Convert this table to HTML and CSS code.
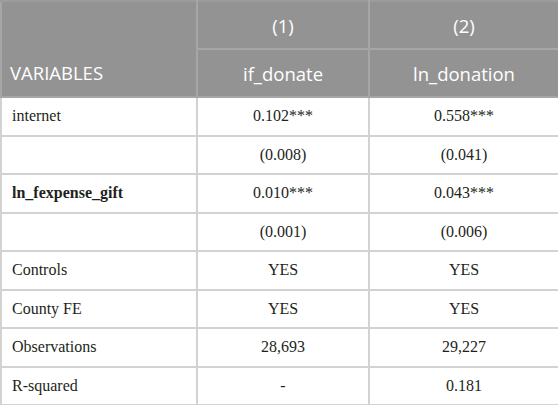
FILE: index.html
```html
<!DOCTYPE html>
<html>
<head>
<meta charset="utf-8">
<link rel="stylesheet" href="styles.css">
</head>
<body>
<table class="reg">
  <colgroup>
    <col class="c1">
    <col class="c2">
    <col class="c3">
  </colgroup>
  <thead>
    <tr class="hrow">
      <th class="var" rowspan="2">VARIABLES</th>
      <th>(1)</th>
      <th>(2)</th>
    </tr>
    <tr class="hrow">
      <th>if_donate</th>
      <th>ln_donation</th>
    </tr>
  </thead>
  <tbody>
    <tr><td class="lab">internet</td><td>0.102***</td><td>0.558***</td></tr>
    <tr><td class="lab"></td><td>(0.008)</td><td>(0.041)</td></tr>
    <tr><td class="lab bold">ln_fexpense_gift</td><td>0.010***</td><td>0.043***</td></tr>
    <tr><td class="lab"></td><td>(0.001)</td><td>(0.006)</td></tr>
    <tr><td class="lab">Controls</td><td>YES</td><td>YES</td></tr>
    <tr><td class="lab">County FE</td><td>YES</td><td>YES</td></tr>
    <tr><td class="lab">Observations</td><td>28,693</td><td>29,227</td></tr>
    <tr><td class="lab">R-squared</td><td>-</td><td>0.181</td></tr>
  </tbody>
</table>
</body>
</html>
```
FILE: styles.css
```css
html, body {
  margin: 0;
  padding: 0;
  background: #ffffff;
}
.reg {
  width: 558px;
  border-collapse: collapse;
  table-layout: fixed;
  font-family: "Liberation Serif", "Times New Roman", serif;
  font-size: 16px;
  color: #231f20;
}
.c1 { width: 196px; }
.c2 { width: 172px; }
.c3 { width: 190px; }
.reg th {
  background: #939393;
  color: #ffffff;
  font-family: "Open Sans", "Liberation Sans", sans-serif;
  font-weight: normal;
  font-size: 18.5px;
  height: 46px;
  padding: 0 8px;
  text-align: center;
  vertical-align: middle;
  border: 2px solid #a6a6a6;
  border-top-color: #9c9c9c;
}
.reg th.var {
  text-align: left;
  vertical-align: bottom;
  padding: 0 8px 11px 8px;
}
.reg td {
  height: 36.5px;
  padding: 0 8px;
  text-align: center;
  vertical-align: middle;
  border: 2px solid #d2d2d2;
}
.reg td.lab {
  text-align: left;
  padding-left: 10px;
}
.reg td.bold {
  font-weight: bold;
}
```
